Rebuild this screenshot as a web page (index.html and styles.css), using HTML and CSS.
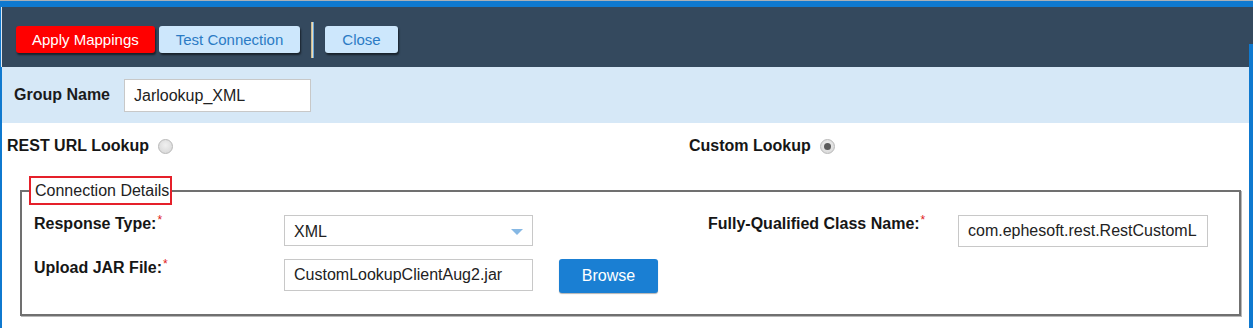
FILE: index.html
```html
<!DOCTYPE html>
<html>
<head>
<meta charset="utf-8">
<link rel="stylesheet" href="styles.css">
</head>
<body>
<div class="topbar"></div>
<div class="page">
  <div class="toolbar">
    <button class="btn btn-red">Apply Mappings</button>
    <button class="btn btn-light">Test Connection</button>
    <span class="sep"></span>
    <button class="btn btn-light">Close</button>
  </div>
  <div class="group">
    <label class="group-label">Group Name</label>
    <div class="field group-input">Jarlookup_XML</div>
  </div>
  <div class="lookup">
    <div class="lookup-opt"><span class="lookup-label">REST URL Lookup</span><span class="radio"></span></div>
    <div class="lookup-opt"><span class="lookup-label">Custom Lookup</span><span class="radio checked"></span></div>
  </div>
  <fieldset class="conn">
    <legend class="conn-legend">Connection Details</legend>
    <div class="conn-grid">
      <div class="flabel">Response Type:<sup class="req">*</sup></div>
      <div class="field select">XML<span class="caret"></span></div>
      <div></div>
      <div class="flabel">Fully-Qualified Class Name:<sup class="req">*</sup></div>
      <div class="field wide">com.ephesoft.rest.RestCustomL</div>
      <div class="flabel">Upload JAR File:<sup class="req">*</sup></div>
      <div class="field">CustomLookupClientAug2.jar</div>
      <div><button class="browse">Browse</button></div>
    </div>
  </fieldset>
</div>
<div class="edge"></div>
</body>
</html>
```
FILE: styles.css
```css
html, body {
  margin: 0;
  padding: 0;
  background: #ffffff;
  font-family: "Liberation Sans", Arial, sans-serif;
  color: #1b1b1b;
}
body {
  position: relative;
  width: 1253px;
  height: 328px;
  overflow: hidden;
}
.topbar {
  height: 6px;
  border-top: 1px solid #a8b0b8;
  background: #0f79cf;
}
.page {
  border-left: 2px solid #0f79cf;
  height: 321px;
  box-sizing: border-box;
}
.toolbar {
  height: 60px;
  box-sizing: border-box;
  background: #34495e;
  display: flex;
  align-items: center;
  padding: 5px 0 0 14px;
  border-left: 1px solid #dfe8f0;
  margin-left: -1px;
}
.btn {
  height: 27px;
  padding: 0 17px;
  border: none;
  border-radius: 3px;
  font-family: "Liberation Sans", Arial, sans-serif;
  font-size: 15px;
  white-space: nowrap;
  box-shadow: 1px 2px 2px rgba(0, 0, 0, 0.55);
  margin-right: 4px;
}
.btn-red {
  background: #ff0000;
  color: #ffffff;
  padding: 0 16px;
}
.btn-light {
  background: #cde7fc;
  color: #2b7bc4;
}
.sep {
  width: 3px;
  height: 36px;
  background: linear-gradient(to right, #cdbb8f 0, #cdbb8f 1px, #e7dcc0 1px, #e7dcc0 2px, #6aa7dc 2px);
  margin: 0 11px 0 7px;
}
.group {
  height: 56px;
  background: #d6e8f7;
  display: flex;
  align-items: center;
  padding-left: 12px;
  gap: 14px;
}
.group-label {
  font-weight: bold;
  font-size: 16px;
  color: #1b1b1b;
}
.field {
  box-sizing: border-box;
  width: 249px;
  height: 32px;
  border: 1px solid #c8c8c8;
  background: #ffffff;
  font-size: 16px;
  line-height: 30px;
  padding-left: 9px;
  color: #222222;
  white-space: nowrap;
  overflow: hidden;
}
.group-input {
  width: 187px;
  height: 33px;
  line-height: 31px;
  margin-top: 1px;
}
.lookup {
  display: grid;
  grid-template-columns: 682px 1fr;
  padding: 14px 0 0 5px;
  height: 53px;
  box-sizing: border-box;
}
.lookup-opt {
  display: flex;
  align-items: center;
  height: 18px;
}
.lookup-label {
  font-weight: bold;
  font-size: 16px;
  line-height: 18px;
  color: #161616;
  margin-right: 9px;
}
.radio {
  box-sizing: border-box;
  width: 15px;
  height: 15px;
  border-radius: 50%;
  border: 1px solid #b8b8b8;
  background: radial-gradient(circle at 50% 40%, #f0f0f0 0%, #d4d4d4 100%);
  position: relative;
}
.radio.checked::after {
  content: "";
  position: absolute;
  left: 3px;
  top: 3px;
  width: 7px;
  height: 7px;
  border-radius: 50%;
  background: #5a5a5a;
}
.conn {
  margin: 0 12px 0 18px;
  padding: 10px 12px 21px 12px;
  border: 2px solid #707070;
  box-shadow: 1px 1px 0 #b8b8b8;
  min-inline-size: 0;
}
.conn-legend {
  margin-left: -5px;
  padding: 0 1px 0 4px;
  border: 2px solid #e5202a;
  font-size: 16px;
  line-height: 25px;
  color: #222222;
}
.conn-grid {
  display: grid;
  grid-template-columns: 250px 275px 149px 250px auto;
  row-gap: 12px;
  align-items: start;
}
.flabel {
  font-weight: bold;
  font-size: 16px;
  line-height: 18px;
  color: #161616;
}
.req {
  color: #e02020;
  font-size: 12px;
  font-weight: normal;
  vertical-align: top;
  line-height: 10px;
  margin-left: 1px;
}
.select {
  position: relative;
  height: 31px;
  line-height: 31px;
}
.caret {
  position: absolute;
  right: 9px;
  top: 13px;
  width: 0;
  height: 0;
  border-left: 6px solid transparent;
  border-right: 6px solid transparent;
  border-top: 6px solid #86b8e4;
}
.wide {
  width: 250px;
  padding-left: 9px;
}
.browse {
  width: 99px;
  height: 34px;
  border: none;
  border-radius: 3px;
  background: #1a7fd3;
  color: #ffffff;
  font-family: "Liberation Sans", Arial, sans-serif;
  font-size: 16px;
  box-shadow: 0 1px 1px rgba(0, 0, 0, 0.3);
}
.edge {
  position: absolute;
  right: 0;
  top: 44px;
  bottom: 0;
  width: 4px;
  background: #0f79cf;
}
```
